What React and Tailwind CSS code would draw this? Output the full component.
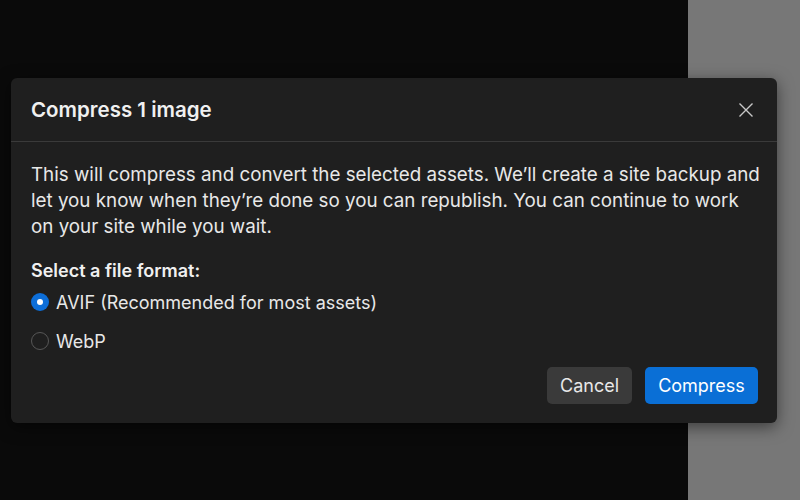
import React, { useState } from 'react';

const App = () => {
  const [format, setFormat] = useState('avif');

  const Radio = ({ value, label }) => (
    <label className="h-[24px] flex items-center gap-[7px] cursor-pointer" onClick={() => setFormat(value)}>
      {format === value ? (
        <span className="w-[18px] h-[18px] rounded-full bg-[#0d6ed8] flex items-center justify-center">
          <span className="w-[6px] h-[6px] rounded-full bg-white" />
        </span>
      ) : (
        <span className="w-[18px] h-[18px] rounded-full border-[1.5px] border-[#575757]" />
      )}
      <span className="text-[18px] text-[#e8e8e8]">{label}</span>
    </label>
  );

  return (
    <div className="relative w-[800px] h-[500px] bg-[#0a0a0a] overflow-hidden" style={{ fontFamily: 'Inter, "Noto Sans", sans-serif' }}>
      {/* backdrop panel on the right */}
      <div className="absolute left-[688px] top-0 w-[112px] h-[500px] bg-[#777777]" />

      {/* dialog */}
      <div className="absolute left-[11px] top-[78px] w-[766px] h-[345px] bg-[#1f1f1f] rounded-[6px] shadow-[0_4px_16px_rgba(0,0,0,0.5)] flex flex-col text-[#f0f0f0]">
        <div className="h-[64px] shrink-0 flex items-center justify-between pl-[20px] pr-[22px] pt-[1px] border-b border-[#3a3a3a]">
          <h2 className="text-[20.5px] font-semibold">Compress 1 image</h2>
          <button className="text-[#c8c8c8]">
            <svg width="18" height="18" viewBox="0 0 18 18" fill="none" stroke="currentColor" strokeWidth="1.4">
              <path d="M2.5 2.5 L15.5 15.5 M15.5 2.5 L2.5 15.5" />
            </svg>
          </button>
        </div>

        <div className="flex-1 flex flex-col pl-[20px] pr-[19px] pt-[20px] pb-[19px]">
          <p className="text-[18.8px] leading-[26px] text-[#e8e8e8] -mr-[6px]">
            This will compress and convert the selected assets. We’ll create a site backup and let you know when they’re done so you can republish. You can continue to work on your site while you wait.
          </p>

          <div className="mt-[20px] text-[18px] leading-[22px] font-semibold">Select a file format:</div>

          <div className="mt-[8px] flex flex-col gap-[15px]">
            <Radio value="avif" label="AVIF (Recommended for most assets)" />
            <Radio value="webp" label="WebP" />
          </div>

          <div className="mt-auto flex justify-end gap-[13px]">
            <button className="h-[37px] w-[85px] rounded-[5px] bg-[#3a3a3a] text-[18px] text-[#e8e8e8]">Cancel</button>
            <button className="h-[37px] w-[113px] rounded-[5px] bg-[#0a6fd6] text-[18px] text-white">Compress</button>
          </div>
        </div>
      </div>
    </div>
  );
};

export default App;
